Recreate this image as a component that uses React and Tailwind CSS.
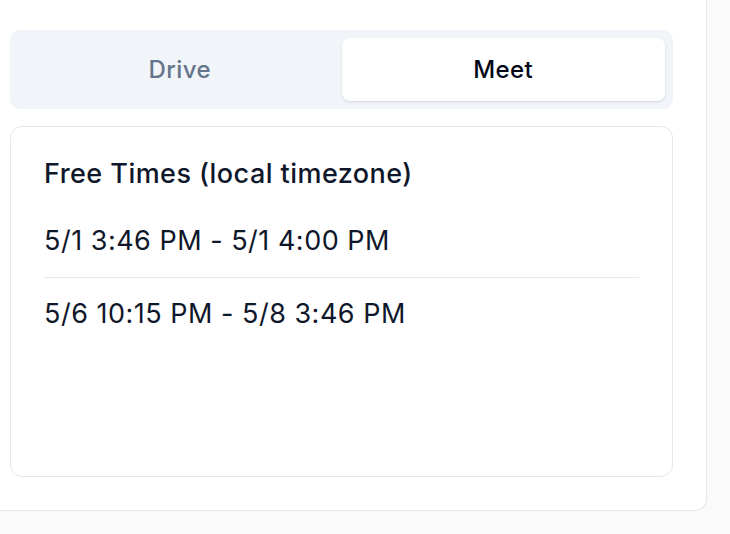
const SLOTS = [
  '5/1 3:46 PM - 5/1 4:00 PM',
  '5/6 10:15 PM - 5/8 3:46 PM',
]

export default function App() {
  return (
    <div className="min-h-[534px] bg-[#fafafa] font-['Inter',sans-serif] text-[#0f172a]">
      <div className="w-[707px] bg-white pl-[10px] pr-[33px] pt-[30px] pb-[33px] border-r border-b border-[#e5e7eb] rounded-br-[12px]">
        {/* Tabs */}
        <div className="grid grid-cols-2 p-[8px] bg-[#f1f5f9] rounded-[10px]">
          <button className="h-[63px] text-[24px] tracking-[0.4px] font-medium text-[#64748b] rounded-[8px]">
            Drive
          </button>
          <button className="h-[63px] text-[24px] tracking-[0.4px] font-medium text-[#020617] bg-white rounded-[8px] shadow-sm">
            Meet
          </button>
        </div>

        {/* Free times */}
        <div className="mt-[17px] h-[351px] border border-[#e5e7eb] rounded-[12px] pl-[33px] pr-[33px] pt-[29px]">
          <div className="text-[27px] leading-[36px] tracking-[0.45px] font-medium mb-[13px]">
            Free Times (local timezone)
          </div>
          <div className="divide-y divide-[#e2e8f0]">
            {SLOTS.map((s) => (
              <div key={s} className="py-[18px] text-[27px] leading-[36px] tracking-[0.5px]">
                {s}
              </div>
            ))}
          </div>
        </div>
      </div>
    </div>
  )
}
